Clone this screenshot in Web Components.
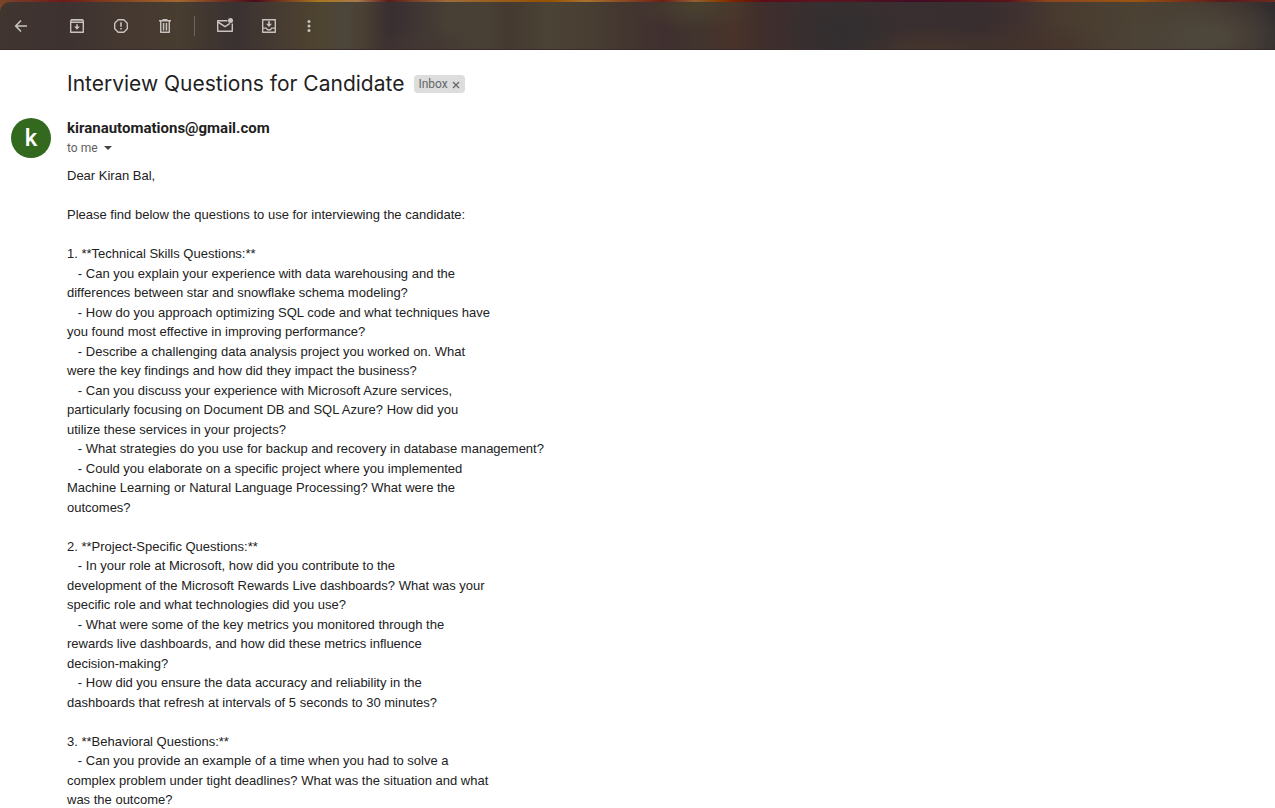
<!DOCTYPE html>
<html lang="en">
<head>
<meta charset="utf-8">
<meta name="viewport" content="width=device-width, initial-scale=1">
<title>Interview Questions for Candidate</title>
<style>
  body { margin: 0; background: #fff; color: #222; font-family: "Roboto", sans-serif; }
</style>
</head>
<body>
<mail-app>
  <mail-toolbar slot="toolbar">
    <tool-button slot="back" label="Back to Inbox" icon="back"></tool-button>
    <tool-button label="Archive" icon="archive"></tool-button>
    <tool-button label="Report spam" icon="spam"></tool-button>
    <tool-button label="Delete" icon="delete"></tool-button>
    <tool-button slot="second" label="Mark as unread" icon="unread"></tool-button>
    <tool-button slot="second" label="Move to" icon="move"></tool-button>
    <tool-button slot="more" label="More" icon="more"></tool-button>
  </mail-toolbar>
  <mail-subject>Interview Questions for Candidate<label-chip slot="labels">Inbox</label-chip></mail-subject>
  <mail-message initial="k">
    <span slot="sender">kiranautomations@gmail.com</span>
    <span slot="recipient">to me</span>
    <message-text>Dear Kiran Bal,

Please find below the questions to use for interviewing the candidate:

1. **Technical Skills Questions:**
   - Can you explain your experience with data warehousing and the
differences between star and snowflake schema modeling?
   - How do you approach optimizing SQL code and what techniques have
you found most effective in improving performance?
   - Describe a challenging data analysis project you worked on. What
were the key findings and how did they impact the business?
   - Can you discuss your experience with Microsoft Azure services,
particularly focusing on Document DB and SQL Azure? How did you
utilize these services in your projects?
   - What strategies do you use for backup and recovery in database management?
   - Could you elaborate on a specific project where you implemented
Machine Learning or Natural Language Processing? What were the
outcomes?

2. **Project-Specific Questions:**
   - In your role at Microsoft, how did you contribute to the
development of the Microsoft Rewards Live dashboards? What was your
specific role and what technologies did you use?
   - What were some of the key metrics you monitored through the
rewards live dashboards, and how did these metrics influence
decision-making?
   - How did you ensure the data accuracy and reliability in the
dashboards that refresh at intervals of 5 seconds to 30 minutes?

3. **Behavioral Questions:**
   - Can you provide an example of a time when you had to solve a
complex problem under tight deadlines? What was the situation and what
was the outcome?</message-text>
  </mail-message>
</mail-app>

<script>
const define = (name, markup, setup) => {
  customElements.define(name, class extends HTMLElement {
    constructor() {
      super();
      this.attachShadow({ mode: "open" }).innerHTML = markup;
    }
    connectedCallback() { if (setup) setup(this, this.shadowRoot); }
  });
};

define("mail-app", `
  <style>
    :host { display: flex; flex-direction: column; height: 100vh; }
    main { flex: 1; min-height: 0; overflow-y: auto; scrollbar-width: none; }
  </style>
  <slot name="toolbar"></slot>
  <main><slot></slot></main>`);

define("mail-toolbar", `
  <style>
    :host {
      display: block; padding-top: 2px; flex: none;
      background:
        linear-gradient(90deg, #7a4428 0%, #6e1a1c 5%, #83411f 9%, #a4662c 14%, #4a0c1c 20%, #a8761f 25%, #a87a4a 28%, #5a1c1c 30.5%, #9c6c38 35%, #965000 43%, #a8702c 46%, #6b2018 52%, #8e6030 54.5%, #8a3c00 56.5%, #7c2400 57.5%, #5c0c18 60%, #5a1620 65%, #420c24 72%, #571418 79%, #8a4420 82%, #9c5410 89%, #7a3018 93%, #561a1c 96%, #6e2a20 100%);
    }
    nav {
      display: flex; align-items: center; height: 48px; box-sizing: border-box;
      border-bottom: 1px solid #3a2c2c; border-top-left-radius: 10px;
      background:
        radial-gradient(60px 24px at 33% 100%, #433733 0%, #43373300 100%),
        radial-gradient(60px 24px at 54.5% 10%, #49412f 0%, #49412f00 100%),
        radial-gradient(60px 40px at 66% 60%, #322e2f 10%, #322e2f00 100%),
        radial-gradient(90px 24px at 73% 100%, #45352c 0%, #45352c00 100%),
        radial-gradient(80px 30px at 81% 100%, #44332b 0%, #44332b00 100%),
        radial-gradient(90px 44px at 94.5% 75%, #4d463a 20%, #4d463a00 100%),
        linear-gradient(90deg, #40352f 0%, #3d3231 5%, #453930 10%, #483d30 14%, #3a3132 18.5%, #473c31 22%, #4e4430 25%, #4c463b 27%, #4a4032 28.5%, #392e31 30.5%, #3b3032 31.5%, #474035 35%, #494035 38%, #453930 40%, #4b4336 43%, #483f32 46%, #43362f 49%, #402f2f 52%, #40342e 54.5%, #49332a 57.5%, #3f2e2c 60%, #3b2e2e 62%, #383031 66%, #392e30 70%, #382d2f 77%, #3f3130 80%, #493b2f 83%, #4b4234 89%, #463a30 94%, #3d322f 97%, #302b2f 100%);
    }
    .group { display: flex; align-items: center; }
    .back { margin-right: 13px; }
    hr { width: 1px; height: 20px; margin: 0 8px 0 7px; border: 0; background: #6d645f; }
  </style>
  <nav aria-label="Message actions">
    <div class="group back"><slot name="back"></slot></div>
    <div class="group"><slot></slot></div>
    <hr>
    <div class="group"><slot name="second"></slot></div>
    <slot name="more"></slot>
  </nav>`);

const icons = {
  back: `<path d="M16 10H5M10 4.5 4.7 10l5.3 5.5" fill="none" stroke="currentColor" stroke-width="1.6"/>`,
  archive: `<path d="M4.500 3.7h11L16.3 5v11.300H3.7V5z" fill="none" stroke="currentColor" stroke-width="1.4" stroke-linejoin="round"/><path d="M4 4h12v2H4z" opacity=".5"/><path d="M3.500 6h13v1h-13z"/><path d="M9.200 8.200h1.600v2.400h2.100L10 13.800l-2.900-3.200h2.100z"/>`,
  spam: `<path d="M7.2 3.7h5.6l3.5 3.5v5.6l-3.5 3.5H7.2l-3.5-3.5V7.2z" fill="none" stroke="currentColor" stroke-width="1.4" stroke-linejoin="round"/><path d="M9.2 6.2h1.6v4.6H9.2zM9.2 12h1.6v1.5H9.2z"/>`,
  delete: `<path d="M4 4h3.5V3h5v1H16v1.5H4z"/><path d="M5.7 5v11.3h8.6V5" fill="none" stroke="currentColor" stroke-width="1.4" stroke-linejoin="round"/><path d="M7.8 7h1.5v7.5H7.8zM10.7 7h1.5v7.5h-1.5z"/>`,
  unread: `<path d="M12.500 4.700H2.700v10.600h14.600V7.500" fill="none" stroke="currentColor" stroke-width="1.4" stroke-linejoin="round"/><path d="m3 6 7 4.600 5-3.200" fill="none" stroke="currentColor" stroke-width="1.5"/><circle cx="15.500" cy="4.500" r="2.500"/>`,
  move: `<path d="M3.7 3.7h12.6v12.6H3.7z" fill="none" stroke="currentColor" stroke-width="1.4" stroke-linejoin="round"/><path d="M4 12.2h3.3c.6 1.400 1.500 1.800 2.700 1.800s2.100-.4 2.700-1.800H16" fill="none" stroke="currentColor" stroke-width="1.3"/><path d="M9.200 5h1.600v2.700h2.200l-3 3.300-3-3.300h2.200z"/>`,
  more: `<circle cx="10" cy="5.5" r="1.5"/><circle cx="10" cy="10" r="1.5"/><circle cx="10" cy="14.5" r="1.5"/>`
};

define("tool-button", `
  <style>
    :host { display: block; }
    button { display: flex; align-items: center; justify-content: center; width: 44px; height: 40px; padding: 0; border: 0; background: none; color: #c8c3c0; cursor: pointer; }
    :host([slot="back"]) button { width: 42px; }
    :host([slot="more"]) button { width: 36px; }
    svg { width: 20px; height: 20px; fill: currentColor; }
  </style>
  <button type="button"><svg viewBox="0 0 20 20" aria-hidden="true"></svg></button>`,
  (host, root) => {
    root.querySelector("button").setAttribute("aria-label", host.getAttribute("label"));
    root.querySelector("svg").innerHTML = icons[host.getAttribute("icon")];
  });

define("mail-subject", `
  <style>
    :host { display: flex; align-items: center; gap: 10px; padding: 20px 16px 0 67px; }
    h1 { margin: 0; font: 400 21px/28px "Inter", sans-serif; color: #1f1f1f; }
  </style>
  <h1><slot></slot></h1><slot name="labels"></slot>`);

define("label-chip", `
  <style>
    :host { display: flex; align-items: center; height: 18px; border-radius: 4px; background: #ddd; color: #666; font: 12px/18px "Roboto", sans-serif; }
    span { padding-left: 4px; }
    button { display: flex; align-items: center; justify-content: center; width: 17px; height: 18px; padding: 2px 0 0; border: 0; background: none; color: inherit; }
    svg { width: 8px; height: 8px; }
  </style>
  <span><slot></slot></span>
  <button type="button" aria-label="Remove label Inbox"><svg viewBox="0 0 8 8" aria-hidden="true"><path d="m1 1 6 6M7 1 1 7" stroke="currentColor" stroke-width="1.3"/></svg></button>`);

define("mail-message", `
  <style>
    :host { display: grid; grid-template-columns: 40px 1fr; column-gap: 16px; padding: 20px 16px 0 11px; }
    .avatar { display: flex; align-items: center; justify-content: center; width: 40px; height: 40px; border-radius: 50%; background: #33691e; color: #fff; font: 500 24px/40px "Roboto", sans-serif; }
    header { height: 48px; }
    h2 { margin: 0; font: 700 15px/20px "Roboto", sans-serif; color: #1f1f1f; }
    button { display: flex; align-items: center; gap: 6px; padding: 0; border: 0; background: none; color: #5e5e5e; font: 12px/20px "Roboto", sans-serif; }
    svg { width: 8px; height: 4px; fill: #444; }
    .body { grid-column: 2; }
  </style>
  <div class="avatar" aria-hidden="true"></div>
  <header>
    <h2><slot name="sender"></slot></h2>
    <button type="button"><slot name="recipient"></slot><svg viewBox="0 0 8 4" aria-hidden="true"><path d="M0 0h8L4 4z"/></svg></button>
  </header>
  <div class="body"><slot></slot></div>`,
  (host, root) => { root.querySelector(".avatar").textContent = host.getAttribute("initial"); });

define("message-text", `
  <style>
    :host { display: block; font: 13px/1.5 "Liberation Sans", Arial, sans-serif; color: #222; }
    slot { white-space: pre-wrap; }
  </style>
  <slot></slot>`);
</script>
</body>
</html>
